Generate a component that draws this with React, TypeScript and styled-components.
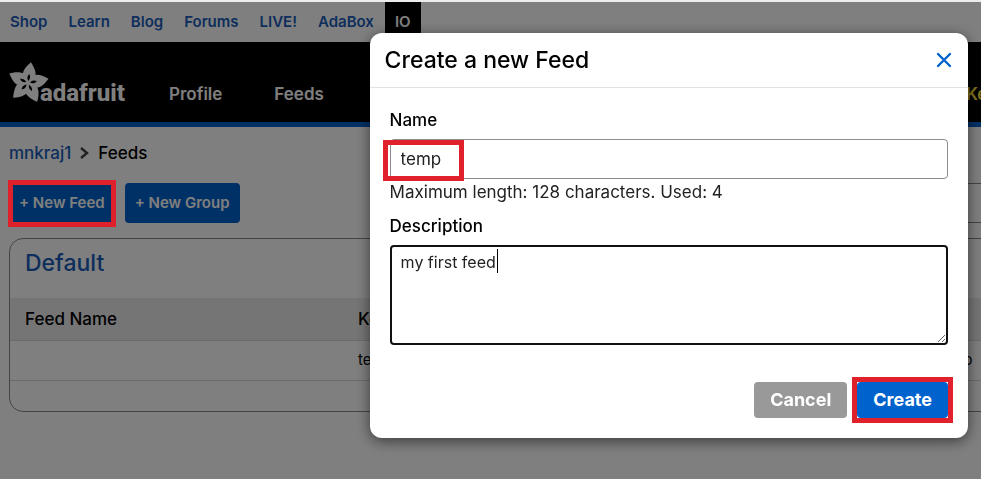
import React, { useState } from 'react';
import styled, { createGlobalStyle, css } from 'styled-components';

const GlobalStyle = createGlobalStyle`
  *, *::before, *::after { box-sizing: border-box; }
  body {
    margin: 0;
    background: #fff;
    color: #000;
    font-family: Inter, "Liberation Sans", sans-serif;
    font-size: 17px;
    line-height: 24px;
  }
  button, input, textarea { font: inherit; }
`;

const BLUE = '#0062cc';
const LINK = '#1b5cb8';

const Page = styled.div`
  min-height: 100vh;
  border-top: 2px solid #ececec;
  overflow: hidden;
`;

const TopBar = styled.nav`
  display: flex;
  gap: 1px;
  height: 40px;
`;

const TopLink = styled.a<{ $active?: boolean }>`
  display: flex;
  align-items: center;
  padding: 0 10px;
  font-size: 15px;
  font-weight: 600;
  text-decoration: none;
  color: ${(p) => (p.$active ? '#fff' : LINK)};
  background: ${(p) => (p.$active ? '#000' : 'transparent')};
`;

/* The site is wider than the window and runs past its right edge. */
const bleed = css`
  width: calc(100% + 64px);
`;

const Header = styled.header`
  ${bleed}
  display: flex;
  align-items: flex-end;
  height: 85px;
  padding: 0 64px 16px 9px;
  background: #000;
  border-bottom: 5px solid ${BLUE};
`;

const Logo = styled.svg`
  width: 124px;
  height: 44px;
  margin-right: 36px;
  margin-bottom: 3px;
  fill: #fff;
`;

const MainNav = styled.nav`
  display: flex;
  flex: 1;
  gap: 52px;
`;

const NavLink = styled.a<{ $key?: boolean }>`
  font-size: 17px;
  font-weight: 600;
  text-decoration: none;
  color: ${(p) => (p.$key ? '#ffe83d' : '#fff')};
  margin-left: ${(p) => (p.$key ? 'auto' : '0')};
  margin-right: ${(p) => (p.$key ? '-16px' : '0')};
`;

const Content = styled.main`
  ${bleed}
  padding: 14px 32px 0 9px;
`;

const Crumbs = styled.div`
  display: flex;
  align-items: center;
  gap: 8px;
  font-weight: 500;

  a {
    color: ${LINK};
    text-decoration: none;
  }
`;

const Actions = styled.div`
  display: flex;
  gap: 10px;
  margin-top: 18px;
`;

const Marked = styled.span<{ $inset: string }>`
  position: relative;
  display: flex;

  &::after {
    content: '';
    position: absolute;
    z-index: 20;
    inset: ${(p) => p.$inset};
    border: 5px solid #e0202b;
    pointer-events: none;
  }
`;

const ActionButton = styled.button`
  height: 40px;
  padding: 0 10px;
  border: 0;
  border-radius: 4px;
  background: ${BLUE};
  color: #fff;
  font-size: 15px;
  font-weight: 600;
  white-space: nowrap;
`;

const SearchInput = styled.input`
  width: 300px;
  height: 40px;
  margin-left: auto;
  border: 1px solid #888;
  border-radius: 4px;
`;

const Panel = styled.section`
  margin-top: 15px;
  padding-bottom: 30px;
  border: 1px solid #888;
  border-radius: 14px;
`;

const PanelTitle = styled.h2`
  margin: 0;
  padding: 9px 15px 19px;
  font-size: 23px;
  line-height: 31px;
  font-weight: 500;
  color: ${LINK};
`;

const FeedTable = styled.table`
  width: 100%;
  border-collapse: collapse;
  table-layout: fixed;

  th, td {
    height: 40px;
    padding: 0 15px;
    text-align: left;
    border-bottom: 1px solid #d6d6d6;
    white-space: nowrap;
  }
  th {
    height: 42px;
    font-weight: 500;
    background: #ebebeb;
  }
  td {
    font-size: 15px;
  }
  th:first-child { width: 333px; }
  th:last-child { width: 81px; }
`;

const Overlay = styled.div`
  position: fixed;
  inset: 2px 0 0;
  z-index: 10;
  display: flex;
  justify-content: flex-end;
  align-items: flex-start;
  padding: 31px 13px;
  background: rgba(0, 0, 0, 0.5);
`;

const Dialog = styled.form`
  width: 61vw;
  min-width: 420px;
  background: #fff;
  border-radius: 12px;
  box-shadow: 0 3px 14px rgba(0, 0, 0, 0.55);
`;

const DialogHeader = styled.div`
  display: flex;
  align-items: center;
  justify-content: space-between;
  height: 55px;
  padding: 0 15px;
  border-bottom: 1px solid #e2e2e2;
`;

const DialogTitle = styled.h1`
  margin: 0;
  font-size: 23px;
  font-weight: 500;
`;

const CloseButton = styled.button`
  display: flex;
  padding: 0;
  border: 0;
  background: none;

  svg {
    width: 18px;
    height: 18px;
    stroke: ${BLUE};
    stroke-width: 2.4;
    stroke-linecap: round;
  }
`;

const Fields = styled.div`
  display: flex;
  flex-direction: column;
  padding: 20px 20px 37px;
`;

const Label = styled.label`
  margin-bottom: 7px;
  font-weight: 500;
`;

const TextInput = styled.input`
  flex: 1;
  min-width: 0;
  height: 40px;
  padding: 0 10px;
  border: 1px solid #8c8c8c;
  border-radius: 4px;
  color: #222;
`;

const Hint = styled.p`
  margin: 1px 0 10px;
  color: #222;
`;

const AreaWrap = styled.div`
  position: relative;
  display: flex;
`;

const TextArea = styled.textarea`
  flex: 1;
  height: 100px;
  padding: 3px 9px;
  border: 2px solid #111;
  border-radius: 4px;
  outline: 0;
  color: #222;
  font-size: 16px;
  resize: vertical;
`;

const Caret = styled.span`
  position: absolute;
  left: 107px;
  top: 4px;
  width: 1px;
  height: 24px;
  background: #000;
`;

const DialogFooter = styled.div`
  display: flex;
  justify-content: flex-end;
  gap: 10px;
  padding: 0 20px 20px;
`;

const DialogButton = styled.button<{ $primary?: boolean }>`
  height: 36px;
  padding: 0 16px;
  border: 0;
  border-radius: 4px;
  background: ${(p) => (p.$primary ? BLUE : '#999')};
  color: #fff;
  font-size: 18px;
  font-weight: 700;
`;

const petals = [8, 78, 154, 225, 297];
const topLinks = ['Shop', 'Learn', 'Blog', 'Forums', 'LIVE!', 'AdaBox'];

function AdafruitLogo() {
  return (
    <Logo viewBox="0 0 124 44" role="img" aria-label="adafruit">
      {petals.map((a) => (
        <path
          key={a}
          transform={`translate(19 24) rotate(${a})`}
          d="M0 3 L-5 -4 C-8 -9 -6 -14 0 -21 C6 -14 8 -9 5 -4Z"
        />
      ))}
      {petals.map((a) => (
        <path
          key={a}
          fill="#000"
          transform={`translate(19 24) rotate(${a})`}
          d="M0 -2 C-2 -5 -1.4 -7 0 -9 C1.4 -7 2 -5 0 -2Z"
        />
      ))}
      <text x="31" y="42" fontFamily="Roboto" fontSize="24" fontWeight="800">adafruit</text>
    </Logo>
  );
}

export default function App() {
  const [name, setName] = useState('temp');
  const [description, setDescription] = useState('my first feed');

  return (
    <>
      <GlobalStyle />
      <Page>
        <TopBar>
          {topLinks.map((t) => (
            <TopLink key={t} href="#">{t}</TopLink>
          ))}
          <TopLink href="#" $active>IO</TopLink>
        </TopBar>
        <Header>
          <AdafruitLogo />
          <MainNav>
            <NavLink href="#">Profile</NavLink>
            <NavLink href="#">Feeds</NavLink>
            <NavLink href="#" $key>Key</NavLink>
          </MainNav>
        </Header>
        <Content>
          <Crumbs>
            <a href="#">mnkraj1</a>
            <svg width="11" height="14" viewBox="0 0 11 14" fill="none" stroke="#444" strokeWidth="2.4">
              <path d="M2 2l6 5-6 5" />
            </svg>
            <span>Feeds</span>
          </Crumbs>
          <Actions>
            <Marked $inset="-3px -1px -4px -1px">
              <ActionButton>+ New Feed</ActionButton>
            </Marked>
            <ActionButton>+ New Group</ActionButton>
            <SearchInput aria-label="Search" />
          </Actions>
          <Panel>
            <PanelTitle>Default</PanelTitle>
            <FeedTable>
              <thead>
                <tr><th>Feed Name</th><th>Key</th><th /></tr>
              </thead>
              <tbody>
                <tr><td /><td>temp</td><td>ago</td></tr>
              </tbody>
            </FeedTable>
          </Panel>
        </Content>
      </Page>
      <Overlay>
        <Dialog role="dialog" aria-labelledby="dialog-title" onSubmit={(e) => e.preventDefault()}>
          <DialogHeader>
            <DialogTitle id="dialog-title">Create a new Feed</DialogTitle>
            <CloseButton type="button" aria-label="Close">
              <svg viewBox="0 0 18 18"><path d="M3 3l12 12M15 3L3 15" /></svg>
            </CloseButton>
          </DialogHeader>
          <Fields>
            <Label htmlFor="name">Name</Label>
            <Marked $inset="1px calc(100% - 74px) -2px -7px">
              <TextInput id="name" maxLength={128} value={name} onChange={(e) => setName(e.target.value)} />
            </Marked>
            <Hint>Maximum length: 128 characters. Used: {name.length}</Hint>
            <Label htmlFor="description">Description</Label>
            <AreaWrap>
              <TextArea id="description" value={description} onChange={(e) => setDescription(e.target.value)} />
              <Caret />
            </AreaWrap>
          </Fields>
          <DialogFooter>
            <DialogButton type="button">Cancel</DialogButton>
            <Marked $inset="-5px">
              <DialogButton $primary type="submit">Create</DialogButton>
            </Marked>
          </DialogFooter>
        </Dialog>
      </Overlay>
    </>
  );
}
